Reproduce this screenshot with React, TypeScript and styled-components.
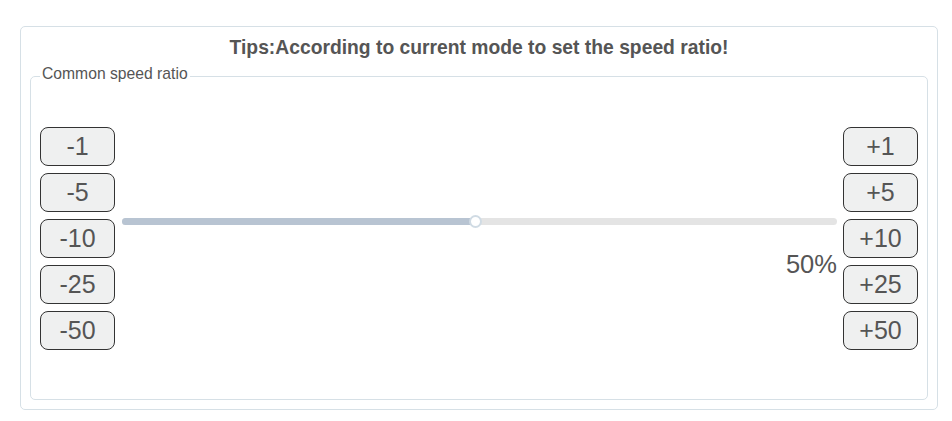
import React from 'react';
import styled, {createGlobalStyle} from "styled-components";

const GlobalStyle = createGlobalStyle`
  body {
    margin: 0;
    background: #ffffff;
    font-family: "Liberation Sans", Arial, sans-serif;
  }
`

const minusSteps = [-1, -5, -10, -25, -50];
const plusSteps = [1, 5, 10, 25, 50];

export default function App() {
    const ratio = 50;
    // thumb sits slightly left of the geometric middle, as in the original widget
    const pos = `calc(${ratio}% - 4px)`;

    return (
        <>
            <GlobalStyle/>
            <Panel>
                <Title>Tips:According to current mode to set the speed ratio!</Title>
                <Group>
                    <Legend>Common speed ratio</Legend>
                    <Row>
                        <StepColumn>
                            {minusSteps.map(step => (
                                <StepButton key={step}>{step}</StepButton>
                            ))}
                        </StepColumn>

                        <SliderArea>
                            <Track>
                                <Fill style={{width: pos}}/>
                                <Thumb style={{left: pos}}/>
                            </Track>
                            <Value>{ratio}%</Value>
                        </SliderArea>

                        <StepColumn>
                            {plusSteps.map(step => (
                                <StepButton key={step}>+{step}</StepButton>
                            ))}
                        </StepColumn>
                    </Row>
                </Group>
            </Panel>
        </>
    );
}

const Panel = styled.div`
  width: 918px;
  box-sizing: border-box;
  margin: 26px 0 0 20px;
  padding: 10px 9px 9px 9px;
  border: 1px solid #d6e0e6;
  border-radius: 5px;
`
const Title = styled.div`
  text-align: center;
  font-size: 19.3px;
  font-weight: bold;
  line-height: 22px;
  color: #555555;
  margin-bottom: 6px;
`
const Group = styled.fieldset`
  margin: 0;
  padding: 0 9px 49px 9px;
  border: 1px solid #d6e0e6;
  border-radius: 5px;
`
const Legend = styled.legend`
  padding: 0 2px 4px 2px;
  font-size: 15.7px;
  line-height: 18px;
  color: #555555;
`
const Row = styled.div`
  display: flex;
  margin-top: 40px;
`
const StepColumn = styled.div`
  display: flex;
  flex-direction: column;
  gap: 7px;
`
const StepButton = styled.button`
  width: 75px;
  height: 39px;
  box-sizing: border-box;
  padding: 0;
  border: 1px solid #333333;
  border-radius: 8px;
  background: #eff0f0;
  font-family: "Liberation Sans", Arial, sans-serif;
  font-size: 25px;
  color: #555555;
  cursor: pointer;
`
const SliderArea = styled.div`
  flex: 1;
  display: flex;
  flex-direction: column;
  padding: 88px 6px 0 7px;
`
const Track = styled.div`
  position: relative;
  height: 7px;
  margin: 3px 0 2px 0;
  border-radius: 4px;
  background: #e4e4e4;
`
const Fill = styled.div`
  height: 100%;
  border-radius: 4px;
  background: #b8c4d2;
`
const Thumb = styled.div`
  position: absolute;
  top: 50%;
  width: 9px;
  height: 9px;
  margin: -6.5px 0 0 -6.5px;
  border: 2px solid #d0dbe4;
  border-radius: 50%;
  background: #ffffff;
`
const Value = styled.div`
  align-self: flex-end;
  margin-top: 23px;
  font-size: 25.5px;
  line-height: 29px;
  color: #555555;
`
